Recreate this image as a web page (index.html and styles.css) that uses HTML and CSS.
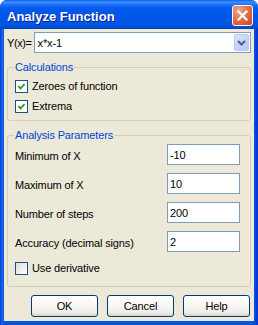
FILE: index.html
```html
<!DOCTYPE html>
<html>
<head>
<meta charset="utf-8">
<link rel="stylesheet" href="styles.css">
</head>
<body>
<div class="window">
  <div class="titlebar">
    <span class="title">Analyze Function</span>
    <span class="close">
      <svg width="11" height="11" viewBox="0 0 11 11"><path d="M1.5 1.5 L9.5 9.5 M9.5 1.5 L1.5 9.5" stroke="#fff" stroke-width="2.2" stroke-linecap="square"/></svg>
    </span>
  </div>
  <div class="client">
    <div class="funcrow">
      <span class="funclbl">Y(x)=</span>
      <div class="combo">
        <span class="combo-text">x*x-1</span>
        <span class="combo-btn">
          <svg width="9" height="6" viewBox="0 0 9 6"><path d="M1 1 L4.5 4.5 L8 1" fill="none" stroke="#4D6185" stroke-width="2"/></svg>
        </span>
      </div>
    </div>
    <fieldset class="group calc">
      <legend>Calculations</legend>
      <div class="check"><span class="box checked"><svg width="9" height="9" viewBox="0 0 9 9"><path d="M1.5 4 L3.5 6.5 L7.5 2" fill="none" stroke="#21A121" stroke-width="1.8"/></svg></span><span>Zeroes of function</span></div>
      <div class="check"><span class="box checked"><svg width="9" height="9" viewBox="0 0 9 9"><path d="M1.5 4 L3.5 6.5 L7.5 2" fill="none" stroke="#21A121" stroke-width="1.8"/></svg></span><span>Extrema</span></div>
    </fieldset>
    <fieldset class="group params">
      <legend>Analysis Parameters</legend>
      <div class="param"><span>Minimum of X</span><div class="input">-10</div></div>
      <div class="param"><span>Maximum of X</span><div class="input">10</div></div>
      <div class="param"><span>Number of steps</span><div class="input">200</div></div>
      <div class="param"><span>Accuracy (decimal signs)</span><div class="input">2</div></div>
      <div class="check deriv"><span class="box"></span><span>Use derivative</span></div>
    </fieldset>
    <div class="buttons">
      <div class="btn">OK</div>
      <div class="btn">Cancel</div>
      <div class="btn">Help</div>
    </div>
  </div>
</div>
</body>
</html>
```
FILE: styles.css
```css
html, body {
  margin: 0;
  padding: 0;
  background: #fff;
}
.window {
  width: 258px;
  height: 325px;
  box-sizing: border-box;
  display: flex;
  flex-direction: column;
  background: linear-gradient(to right, #0831D9 0px, #166AEE 2px, #0855DD 4px, #0855DD 254px, #0831D9 258px);
  border-radius: 7px 7px 0 0;
  overflow: hidden;
  font-family: "Liberation Sans", Arial, sans-serif;
  font-size: 11px;
  letter-spacing: -0.15px;
  color: #000;
}
.titlebar {
  height: 29px;
  flex: none;
  display: flex;
  align-items: center;
  justify-content: space-between;
  padding: 0 5px 0 7px;
  background: linear-gradient(to bottom, #0A60F0 0px, #3B8FFF 2px, #1D6EF5 5px, #0058EE 9px, #0055E5 18px, #0055E5 24px, #0050D8 27px, #003FB8 29px);
}
.title {
  color: #fff;
  font-weight: bold;
  font-size: 13px;
  letter-spacing: 0;
  padding-top: 3px;
  text-shadow: 1px 1px 0 #0A1E8A;
}
.close {
  width: 19px;
  height: 19px;
  border: 1px solid #fff;
  border-radius: 3px;
  display: flex;
  align-items: center;
  justify-content: center;
  background: radial-gradient(circle at 30% 25%, #F2A88E 0%, #E4704C 45%, #C9441F 100%);
  margin-top: 1px;
}
.client {
  flex: 1;
  margin: 0 4px 4px 4px;
  background: #ECE9D8;
  padding: 3px 3px 0 3px;
  display: flex;
  flex-direction: column;
}
.funcrow {
  display: flex;
  align-items: center;
  height: 21px;
  gap: 2px;
}
.funclbl {
  flex: none;
  letter-spacing: -0.4px;
}
.combo {
  flex: 1;
  height: 21px;
  box-sizing: border-box;
  border: 1px solid #7F9DB9;
  background: #fff;
  display: flex;
  align-items: center;
  justify-content: space-between;
  padding: 0 1px 0 3px;
}
.combo-btn {
  width: 15px;
  height: 17px;
  box-sizing: border-box;
  border: 1px solid #BAC9EE;
  border-radius: 2px;
  background: linear-gradient(135deg, #DCE6FD 0%, #C4D4FA 50%, #B3C7F6 100%);
  display: flex;
  align-items: center;
  justify-content: center;
}
.group {
  margin: 0;
  border: 1px solid #D0D0BF;
  border-radius: 3px;
  padding: 0 3px 0 7px;
  min-width: 0;
}
.group legend {
  color: #0046D5;
  line-height: 13px;
  padding: 0 1px;
  margin-left: -1px;
}
.calc {
  margin-top: 8px;
  padding-top: 2px;
  padding-bottom: 4px;
}
.params {
  margin-top: 8px;
  padding-top: 2px;
  padding-bottom: 8px;
  padding-right: 10px;
}
.check {
  display: flex;
  align-items: center;
  height: 20px;
  gap: 4px;
}
.box {
  width: 13px;
  height: 13px;
  box-sizing: border-box;
  border: 1px solid #1C5180;
  background: linear-gradient(135deg, #DCDCD7 0%, #F0F0EC 55%, #FFFFFF 100%);
  display: flex;
  align-items: center;
  justify-content: center;
  flex: none;
}
.box.checked {
  background: #fff;
}
.param {
  display: flex;
  align-items: center;
  justify-content: space-between;
  height: 21px;
  margin-bottom: 7px;
  padding-top: 1px;
  box-sizing: content-box;
}
.param:first-of-type {
  padding-top: 0;
}
.param span {
  padding-top: 2px;
}
.input {
  width: 73px;
  height: 21px;
  box-sizing: border-box;
  border: 1px solid #7F9DB9;
  background: #fff;
  padding: 0 2px;
  display: flex;
  align-items: center;
}
.deriv {
  margin-top: -1px;
}
.buttons {
  display: flex;
  justify-content: flex-end;
  gap: 9px;
  margin-top: 8px;
  padding-right: 1px;
}
.btn {
  width: 67px;
  height: 22px;
  box-sizing: border-box;
  border: 1px solid #003C74;
  border-radius: 3px;
  background: linear-gradient(to bottom, #FFFFFF 0%, #F8F8F5 40%, #F0EFEA 80%, #D8D2C8 100%);
  display: flex;
  align-items: center;
  justify-content: center;
}
```
